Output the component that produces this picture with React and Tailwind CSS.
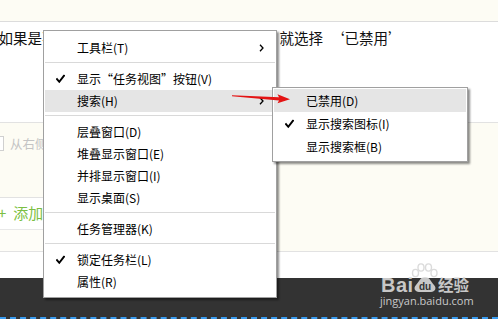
import React from "react";

const CJK = { fontFamily: '"Noto Sans CJK SC", "Liberation Sans", sans-serif' };

function Check() {
  return (
    <svg width="9" height="9" viewBox="0 0 9 9" className="absolute left-[11px] top-1/2 -translate-y-1/2">
      <path d="M1 4.6 L3.3 7.3 L8 1.2" fill="none" stroke="#000" strokeWidth="1.9" strokeLinecap="square" />
    </svg>
  );
}

function Chevron() {
  return (
    <svg width="5" height="8" viewBox="0 0 5 8" className="absolute right-[11px] top-1/2 -translate-y-1/2">
      <path d="M1 0.8 L4 4 L1 7.2" fill="none" stroke="#000" strokeWidth="1.3" />
    </svg>
  );
}

function Item({ label, checked, arrow, hl, sub }) {
  return (
    <div
      className={
        (sub ? "h-[23px] " : "h-[22px] ") +
        "relative flex items-center pl-[32px] text-[12px] leading-none text-black whitespace-nowrap " +
        (hl ? "bg-[#e5e5e5]" : "")
      }
    >
      {checked && <Check />}
      <span>{label}</span>
      {arrow && <Chevron />}
    </div>
  );
}

function Sep() {
  return <div className="mt-[3px] mb-[5px] h-px bg-[#d9d9d9]" />;
}

export default function App() {
  return (
    <div className="relative w-[498px] h-[319px] overflow-hidden bg-white" style={CJK}>
      {/* page underneath */}
      <div className="h-[22px] bg-[#fdfcf4] border-b border-[#dcdcdc]" />
      <div className="h-[100px] pt-[6px] bg-white">
        <div className="flex ml-[-1.5px] whitespace-nowrap text-[14.5px] leading-[20px] text-[#111]">
          <span className="w-[281px] shrink-0">如果是不想显示搜索框，</span>
          <span>就选择</span>
          <span className="w-[21.5px] shrink-0 text-right">‘</span>
          <span>已禁用’</span>
        </div>
      </div>
      <div className="flex h-[130px] border-y border-[#e2e2e2]">
        <div className="w-[272px] flex flex-col">
          <div className="h-[75px] bg-[#fdfcf4] border-b border-[#e2e2e2] pt-[13px] flex items-start">
            <div className="w-[4px] h-[15px] border border-[#d0d0d0] border-l-0 bg-white" />
            <span className="ml-[6px] text-[12.5px] leading-[15px] text-[#c4c4c4]">从右侧拖拽模块</span>
          </div>
          <div className="h-[32px] bg-white flex items-center text-[15px] text-[#7cbf43] border-b border-[#e8e8e8]">
            <span className="ml-[-2px]">+</span>
            <span className="ml-[7px]">添加步骤</span>
          </div>
          <div className="flex-1 bg-[#fefdf8]" />
        </div>
        <div className="flex-1 bg-[#fdfcf4]" />
      </div>
      <div className="h-[26px] bg-white" />
      <div className="h-[38px] bg-[#333333]" />
      <div className="h-[3px] bg-[#333333] border-b-2 border-dashed border-[#3a9cf0]" />

      {/* watermark */}
      <div className="absolute left-[380px] top-[263px] w-[95px] h-[45px] pointer-events-none">
        <div className="absolute left-[1px] top-[11px] text-[20px] font-bold leading-[22px] text-[#d8d8d8] opacity-90 tracking-[0.5px]" style={{ fontFamily: '"Liberation Sans", sans-serif' }}>
          Bai
        </div>
        <svg width="28" height="30" viewBox="0 0 28 30" className="absolute left-[31px] top-0">
          <g fill="none" stroke="#d8d8d8" strokeWidth="1.4" opacity="0.9">
            <ellipse cx="4.5" cy="10" rx="3" ry="3.6" />
            <ellipse cx="10" cy="4.5" rx="3" ry="3.6" />
            <ellipse cx="17.5" cy="4.5" rx="3" ry="3.6" />
            <ellipse cx="23" cy="10" rx="3" ry="3.6" />
          </g>
          <path d="M14 14 C9 14 8 19 5 22 C2 25 4 29 8 29 L20 29 C24 29 26 25 23 22 C20 19 19 14 14 14 Z" fill="#d8d8d8" opacity="0.9" />
          <text x="14" y="27" textAnchor="middle" fontSize="10" fontWeight="bold" fill="#333" fontFamily="Liberation Sans, sans-serif">du</text>
        </svg>
        <div className="absolute left-[58px] top-[12px] text-[15.5px] font-bold leading-[18px] text-[#d8d8d8] opacity-90">经验</div>
        <div className="absolute left-[0px] top-[31px] text-[11px] leading-[13px] text-[#c8c8c8]" style={{ fontFamily: '"Open Sans", "Liberation Sans", sans-serif' }}>
          jingyan.baidu.com
        </div>
      </div>

      {/* main context menu */}
      <div className="absolute left-[43px] top-[30px] w-[234px] bg-white border border-[#a0a0a0] pt-[6px] pb-[4px] px-px shadow-[2px_2px_2px_rgba(0,0,0,0.45)]">
        <Item label="工具栏(T)" arrow />
        <Sep />
        <Item label="显示“任务视图”按钮(V)" checked />
        <Item label="搜索(H)" arrow hl />
        <Sep />
        <Item label="层叠窗口(D)" />
        <Item label="堆叠显示窗口(E)" />
        <Item label="并排显示窗口(I)" />
        <Item label="显示桌面(S)" />
        <Sep />
        <Item label="任务管理器(K)" />
        <Sep />
        <Item label="锁定任务栏(L)" checked />
        <Item label="属性(R)" />
      </div>

      {/* submenu */}
      <div className="absolute left-[272px] top-[87px] w-[196px] bg-white border border-[#a0a0a0] pt-px pb-[3px] px-px shadow-[2px_2px_2px_rgba(0,0,0,0.45)]">
        <Item label="已禁用(D)" hl sub />
        <Item label="显示搜索图标(I)" checked sub />
        <Item label="显示搜索框(B)" sub />
      </div>

      {/* red arrow */}
      <svg width="498" height="319" className="absolute left-0 top-0 pointer-events-none">
        <polygon points="232,95.3 279,97.2 277.5,94.3 290,99.3 277.5,103.2 279,100.6 232,96.3" fill="#e41414" />
      </svg>
    </div>
  );
}
